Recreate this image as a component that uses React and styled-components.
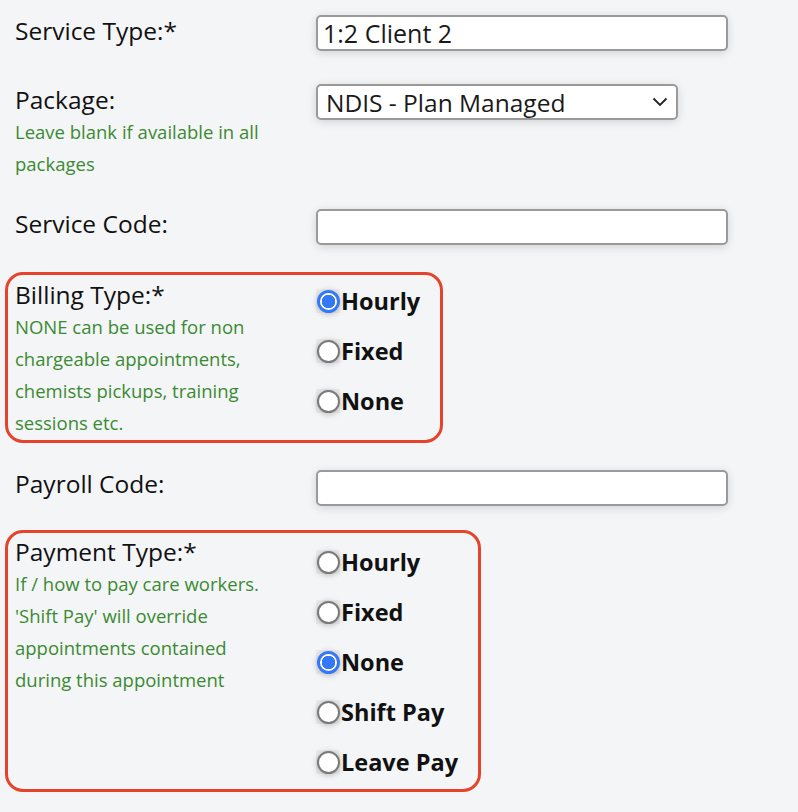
import React, { useState } from "react";
import styled, { createGlobalStyle } from "styled-components";

const GlobalStyle = createGlobalStyle`
  html, body {
    margin: 0;
    padding: 0;
    background-color: #f4f5f7;
  }
  body {
    font-family: "Open Sans", "Noto Sans", sans-serif;
    color: #111;
  }
`;

const Page = styled.form`
  width: 798px;
  min-height: 812px;
  padding: 15px 0 0 5px;
  box-sizing: border-box;
  display: flex;
  flex-direction: column;
  align-items: flex-start;
`;

const Row = styled.div`
  display: grid;
  grid-template-columns: 301px auto;
  align-items: start;
  padding: 0 ${(p) => (p.boxed ? "20px" : "0")} 0 ${(p) => (p.boxed ? "7px" : "10px")};
  margin-bottom: ${(p) => p.gap || 0}px;
  padding-top: ${(p) => p.padTop || 0}px;
  padding-bottom: ${(p) => p.padBottom || 0}px;
  border: ${(p) => (p.boxed ? "3px solid #e5432b" : "none")};
  border-radius: 18px;
`;

const LabelCol = styled.div`
  display: flex;
  flex-direction: column;
  margin-top: ${(p) => p.offset || 0}px;
`;

const Label = styled.label`
  font-size: 24.5px;
  line-height: 32px;
  color: #111;
`;

const Help = styled.div`
  font-size: 18.5px;
  line-height: 32px;
  color: #3b8a32;
  max-width: 262px;
`;

const TextInput = styled.input`
  width: 412px;
  height: 36px;
  box-sizing: border-box;
  border: 2px solid #9a9a9a;
  border-radius: 5px;
  background: #fff;
  box-shadow: 0 2px 10px rgba(0, 0, 0, 0.14);
  padding: 0 5px;
  font-family: inherit;
  font-size: 25px;
  color: #1a1a1a;
  outline: none;
`;

const SelectWrap = styled.div`
  position: relative;
  width: 362px;
`;

const Select = styled.select`
  appearance: none;
  width: 362px;
  height: 36px;
  box-sizing: border-box;
  border: 2px solid #9a9a9a;
  border-radius: 5px;
  background: #fff;
  box-shadow: 0 2px 10px rgba(0, 0, 0, 0.14);
  padding: 0 30px 0 8px;
  font-family: inherit;
  font-size: 24.5px;
  color: #1a1a1a;
  outline: none;
`;

const Chevron = styled.svg`
  position: absolute;
  right: 10px;
  top: 13px;
  pointer-events: none;
`;

const RadioGroup = styled.div`
  display: flex;
  flex-direction: column;
  margin-top: ${(p) => p.offset || 0}px;
`;

const Option = styled.label`
  display: flex;
  align-items: center;
  height: 50px;
  font-size: 23.5px;
  font-weight: 700;
  color: #111;
`;

const RadioBox = styled.span`
  display: inline-flex;
  align-items: center;
  justify-content: center;
  width: 24px;
  height: 24px;
  background: #ebebeb;
  margin-right: 1px;
`;

const Radio = styled.input`
  appearance: none;
  margin: 0;
  width: 23px;
  height: 23px;
  border-radius: 50%;
  box-sizing: border-box;
  border: 2px solid #7a7a7a;
  background: #fff;
  box-shadow: 0 1px 6px rgba(0, 0, 0, 0.25);
  &:checked {
    border: 3px solid #3478f6;
    background: radial-gradient(circle, #3478f6 0 6.5px, #fff 7px);
  }
`;

function RadioList({ name, options, value, onChange, offset }) {
  return (
    <RadioGroup offset={offset}>
      {options.map((o) => (
        <Option key={o}>
          <RadioBox>
            <Radio
              type="radio"
              name={name}
              checked={value === o}
              onChange={() => onChange(o)}
            />
          </RadioBox>
          {o}
        </Option>
      ))}
    </RadioGroup>
  );
}

export default function App() {
  const [billing, setBilling] = useState("Hourly");
  const [payment, setPayment] = useState("None");

  return (
    <>
      <GlobalStyle />
      <Page>
        <Row gap={33}>
          <LabelCol offset={0}>
            <Label>Service Type:*</Label>
          </LabelCol>
          <TextInput type="text" defaultValue="1:2 Client 2" />
        </Row>

        <Row gap={29}>
          <LabelCol>
            <Label>Package:</Label>
            <Help>Leave blank if available in all packages</Help>
          </LabelCol>
          <SelectWrap>
            <Select defaultValue="plan">
              <option value="plan">NDIS - Plan Managed</option>
              <option value="self">NDIS - Self Managed</option>
            </Select>
            <Chevron width="16" height="10" viewBox="0 0 16 10">
              <path d="M1.5 1.5 L8 8 L14.5 1.5" fill="none" stroke="#222" strokeWidth="1.8" />
            </Chevron>
          </SelectWrap>
        </Row>

        <Row gap={27}>
          <LabelCol offset={-1}>
            <Label>Service Code:</Label>
          </LabelCol>
          <TextInput type="text" />
        </Row>

        <Row boxed gap={27} padTop={4} padBottom={1}>
          <LabelCol>
            <Label>Billing Type:*</Label>
            <Help>NONE can be used for non chargeable appointments, chemists pickups, training sessions etc.</Help>
          </LabelCol>
          <RadioList
            name="billing"
            options={["Hourly", "Fixed", "None"]}
            value={billing}
            onChange={setBilling}
            offset={-3}
          />
        </Row>

        <Row gap={24}>
          <LabelCol offset={-2}>
            <Label>Payroll Code:</Label>
          </LabelCol>
          <TextInput type="text" />
        </Row>

        <Row boxed padTop={3} padBottom={2}>
          <LabelCol>
            <Label>Payment Type:*</Label>
            <Help>If / how to pay care workers. 'Shift Pay' will override appointments contained during this appointment</Help>
          </LabelCol>
          <RadioList
            name="payment"
            options={["Hourly", "Fixed", "None", "Shift Pay", "Leave Pay"]}
            value={payment}
            onChange={setPayment}
            offset={1}
          />
        </Row>
      </Page>
    </>
  );
}
